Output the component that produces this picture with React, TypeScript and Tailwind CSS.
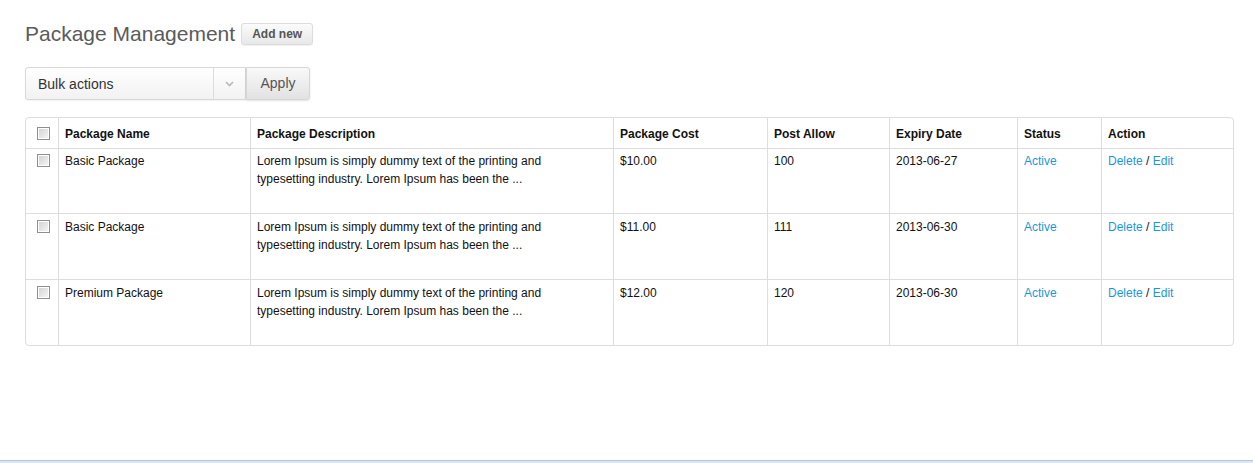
import React from "react";

const rows = [
  { name: "Basic Package", cost: "$10.00", posts: "100", date: "2013-06-27" },
  { name: "Basic Package", cost: "$11.00", posts: "111", date: "2013-06-30" },
  { name: "Premium Package", cost: "$12.00", posts: "120", date: "2013-06-30" },
];

function Check() {
  return (
    <span className="block w-[13px] h-[13px] border border-[#8e8f8f] bg-white p-[1px]">
      <span className="block w-full h-full bg-gradient-to-br from-[#d4d4d4] to-[#f4f4f4]" />
    </span>
  );
}

export default function App() {
  const font = { fontFamily: '"Liberation Sans", Arial, sans-serif' };
  return (
    <div className="h-screen flex flex-col bg-white text-[#111]" style={font}>
      <div className="flex-1 pl-[25px]">
        <div className="pt-[22px] flex items-center h-[46px] box-border">
          <h1 className="text-[21px] leading-[24px] text-[#5b5b5b] font-normal">Package Management</h1>
          <button className="ml-[6px] h-[22px] px-[10px] rounded-[3px] border border-[#dcdcdc] bg-gradient-to-b from-[#fbfbfb] to-[#e8e8e8] text-[12px] font-bold text-[#555] shadow-[0_1px_1px_rgba(0,0,0,0.06)]">
            Add new
          </button>
        </div>

        <div className="mt-[21px] flex h-[33px]">
          <div className="w-[221px] h-full flex border border-[#d8d8d8] rounded-l-[3px] bg-gradient-to-b from-white to-[#f2f2f2] shadow-[0_1px_1px_rgba(0,0,0,0.05)]">
            <div className="flex-1 flex items-center pl-[12px] pt-[1px] text-[14px] text-[#333]">Bulk actions</div>
            <div className="w-[32px] border-l border-[#dcdcdc] flex items-center justify-center">
              <svg width="9" height="6" viewBox="0 0 9 6">
                <path d="M1 1 L4.5 4.5 L8 1" fill="none" stroke="#b8b8b8" strokeWidth="1.6" />
              </svg>
            </div>
          </div>
          <button className="w-[64px] h-full rounded-r-[3px] border border-[#d6d6d6] bg-gradient-to-b from-[#f9f9f9] to-[#e2e2e2] text-[14px] text-[#555] shadow-[0_1px_2px_rgba(0,0,0,0.12)]">
            Apply
          </button>
        </div>

        <div className="mt-[17px] w-[1209px] border border-[#dddddd] rounded-[4px] overflow-hidden">
          <table className="w-full table-fixed border-separate border-spacing-0 text-[12px] leading-[18px]">
            <colgroup>
              <col className="w-[32px]" />
              <col className="w-[192px]" />
              <col className="w-[363px]" />
              <col className="w-[154px]" />
              <col className="w-[122px]" />
              <col className="w-[128px]" />
              <col className="w-[84px]" />
              <col />
            </colgroup>
            <thead>
              <tr className="h-[30px]">
                <th className="align-middle pl-[11px] pt-[1px]"><Check /></th>
                <th className="border-l border-[#dddddd] text-left font-bold px-[6px] pt-[2px]">Package Name</th>
                <th className="border-l border-[#dddddd] text-left font-bold px-[6px] pt-[2px]">Package Description</th>
                <th className="border-l border-[#dddddd] text-left font-bold px-[6px] pt-[2px]">Package Cost</th>
                <th className="border-l border-[#dddddd] text-left font-bold px-[6px] pt-[2px]">Post Allow</th>
                <th className="border-l border-[#dddddd] text-left font-bold px-[6px] pt-[2px]">Expiry Date</th>
                <th className="border-l border-[#dddddd] text-left font-bold px-[6px] pt-[2px]">Status</th>
                <th className="border-l border-[#dddddd] text-left font-bold px-[6px] pt-[2px]">Action</th>
              </tr>
            </thead>
            <tbody>
              {rows.map((r, i) => (
                <tr key={i} className={i === 0 ? "h-[65px]" : "h-[66px]"}>
                  <td className={"border-t border-[#dddddd] align-top pl-[11px] " + (i === 0 ? "pt-[5px]" : "pt-[6px]")}><Check /></td>
                  <td className={"border-t border-l border-[#dddddd] align-top px-[6px] " + (i === 0 ? "pt-[3px]" : "pt-[4px]")}>{r.name}</td>
                  <td className={"border-t border-l border-[#dddddd] align-top px-[6px] " + (i === 0 ? "pt-[3px]" : "pt-[4px]")}>
                    Lorem Ipsum is simply dummy text of the printing and
                    <br />
                    typesetting industry. Lorem Ipsum has been the ...
                  </td>
                  <td className={"border-t border-l border-[#dddddd] align-top px-[6px] " + (i === 0 ? "pt-[3px]" : "pt-[4px]")}>{r.cost}</td>
                  <td className={"border-t border-l border-[#dddddd] align-top px-[6px] " + (i === 0 ? "pt-[3px]" : "pt-[4px]")}>{r.posts}</td>
                  <td className={"border-t border-l border-[#dddddd] align-top px-[6px] " + (i === 0 ? "pt-[3px]" : "pt-[4px]")}>{r.date}</td>
                  <td className={"border-t border-l border-[#dddddd] align-top px-[6px] " + (i === 0 ? "pt-[3px]" : "pt-[4px]")}>
                    <a className="text-[#1b98d8]">Active</a>
                  </td>
                  <td className={"border-t border-l border-[#dddddd] align-top px-[6px] " + (i === 0 ? "pt-[3px]" : "pt-[4px]")}>
                    <a className="text-[#1b98d8]">Delete</a> / <a className="text-[#1b98d8]">Edit</a>
                  </td>
                </tr>
              ))}
            </tbody>
          </table>
        </div>
      </div>
      <div className="h-[3px] border-t border-[#b3c9e0] bg-[#d7e7f8]" />
    </div>
  );
}
